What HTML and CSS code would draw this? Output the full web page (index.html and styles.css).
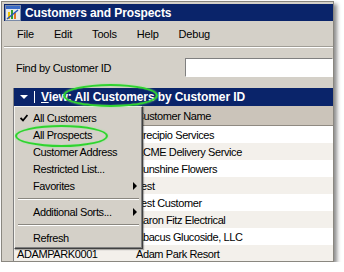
FILE: index.html
```html
<!DOCTYPE html>
<html lang="en">
<head>
<title>Customers and Prospects</title>
<meta charset="utf-8">
<link rel="stylesheet" href="styles.css">
</head>
<body>
<div class="window">
    <div class="titlebar">
        <svg class="appicon" width="16" height="16" viewBox="0 0 16 16">
            <rect x="0.5" y="0.5" width="15" height="15" fill="#e8e8e8" stroke="#7a8aa8"/>
            <rect x="1" y="1" width="14" height="3" fill="#3b6cc8"/>
            <rect x="3" y="7" width="2" height="7" fill="#f2c200"/>
            <rect x="6" y="5" width="2" height="9" fill="#2f9e2f"/>
            <rect x="9" y="8" width="2" height="6" fill="#e07820"/>
            <path d="M2 14 L13 5" stroke="#2a55b8" stroke-width="1.5"/>
        </svg>
        <span class="title">Customers and Prospects</span>
    </div>

    <ul class="menubar">
        <li>File</li>
        <li>Edit</li>
        <li>Tools</li>
        <li>Help</li>
        <li>Debug</li>
    </ul>

    <div class="find">
        <label>Find by Customer ID</label>
        <div class="field"></div>
    </div>

    <div class="grid">
        <div class="viewbar">
            <span class="drop"></span>
            <span class="pipe"></span>
            <span class="viewtext"><u>V</u>iew: All Customers by Customer ID</span>
        </div>
        <!-- id cells under the popup are left blank, it covers them -->
        <div class="row head"><span class="cid"></span><span class="cname">Customer Name</span></div>
        <div class="row"><span class="cid"></span><span class="cname">Precipio Services</span></div>
        <div class="row alt"><span class="cid"></span><span class="cname">ACME Delivery Service</span></div>
        <div class="row"><span class="cid"></span><span class="cname">Sunshine Flowers</span></div>
        <div class="row alt"><span class="cid"></span><span class="cname">Test</span></div>
        <div class="row"><span class="cid"></span><span class="cname">Test Customer</span></div>
        <div class="row alt"><span class="cid"></span><span class="cname">Aaron Fitz Electrical</span></div>
        <div class="row"><span class="cid"></span><span class="cname">Abacus Glucoside, LLC</span></div>
        <div class="row alt"><span class="cid">ADAMPARK0001</span><span class="cname">Adam Park Resort</span></div>

        <ul class="popup">
            <li><span class="tick"><svg width="8" height="8" viewBox="0 0 8 8"><path d="M0.5 4 L3 6.5 L7.5 1" fill="none" stroke="#000" stroke-width="1.8"/></svg></span>All Customers</li>
            <li><span class="tick"></span>All Prospects</li>
            <li><span class="tick"></span>Customer Address</li>
            <li><span class="tick"></span>Restricted List...</li>
            <li><span class="tick"></span>Favorites<span class="sub"></span></li>
            <li class="sep"></li>
            <li><span class="tick"></span>Additional Sorts...<span class="sub"></span></li>
            <li class="sep"></li>
            <li><span class="tick"></span>Refresh</li>
        </ul>
    </div>
</div>

<!-- callout rings drawn over the screenshot -->
<div class="ring ring-view"></div>
<div class="ring ring-prospects"></div>
</body>
</html>
```

FILE: styles.css
```css
body,ul{margin: 0;padding: 0;}
li{list-style: none;}
body{background: #fff;font-family: "Liberation Sans", Arial, sans-serif;font-size: 11px;color: #000;}

.window{width: 333px;height: 261px;margin: 1px 0 0 1px;box-sizing: border-box;border: 1px solid #8a8780;padding: 2px 0 0 2px;background: #d4d0c8;overflow: hidden;position: relative;box-shadow: 3px 3px 4px rgba(0,0,0,.45);}

.titlebar{height: 17px;background: #0a246a;display: flex;align-items: center;}
.appicon{margin: 0 4px 0 1px;flex: none;}
.title{color: #fff;font-weight: bold;font-size: 12px;letter-spacing: -0.1px;}

.menubar{height: 25px;display: flex;align-items: center;padding-left: 13px;border-bottom: 1px solid #a09d96;box-shadow: 0 1px 0 #fff;}
.menubar li{margin-right: 20px;letter-spacing: -0.2px;}

.find{display: flex;align-items: center;height: 19px;margin-top: 11px;padding-left: 12px;}
.find label{width: 169px;flex: none;letter-spacing: -0.3px;}
.field{flex: 1;height: 19px;box-sizing: border-box;background: #fff;border: 1px solid;border-color: #808080 #fff #fff #808080;}

.grid{margin: 11px 0 0 9px;position: relative;background: #fff;border-left: 1px solid #808080;}
.viewbar{height: 18px;background: #0a246a;color: #fff;display: flex;align-items: center;padding-left: 6px;}
.drop{width: 0;height: 0;border-left: 4px solid transparent;border-right: 4px solid transparent;border-top: 4px solid #fff;margin-right: 6px;}
.pipe{width: 1px;height: 12px;background: #fff;margin-right: 6px;}
.viewtext{font-weight: bold;font-size: 12px;letter-spacing: -0.1px;}

.row{height: 17px;display: flex;align-items: center;letter-spacing: -0.4px;}
.row.alt{background: #f3f0eb;}
.row.head{height: 19px;background: #cbc4ba;border-bottom: 1px solid #8f8a82;}
.cid{width: 118px;padding-left: 3px;flex: none;box-sizing: border-box;}
.cname{padding-left: 4px;}

.popup{position: absolute;left: 0;top: 18px;width: 129px;box-sizing: border-box;padding: 2px 0;background: #d4d0c8;border: 1px solid;border-color: #f4f3ef #404040 #404040 #f4f3ef;box-shadow: inset -1px -1px 0 #808080, 1px 1px 1px rgba(0,0,0,.3);}
.popup li{height: 17px;display: flex;align-items: center;padding-right: 5px;letter-spacing: -0.4px;}
.tick{width: 8px;height: 8px;margin: 0 5px 0 5px;flex: none;display: flex;}
.sub{margin-left: auto;width: 0;height: 0;border-left: 4px solid #000;border-top: 4px solid transparent;border-bottom: 4px solid transparent;}
.popup li.sep{height: 1px;margin: 4px 3px 3px 3px;padding: 0;border-top: 1px solid #8a8780;background: #fff;}

.ring{position: absolute;border: 2px solid #2fd42f;border-radius: 50%;box-shadow: 0 0 2px #8cf08c, inset 0 0 1px #8cf08c;}
.ring-view{left: 63px;top: 84px;width: 91px;height: 19px;}
.ring-prospects{left: 15px;top: 125px;width: 89px;height: 18px;}
```
